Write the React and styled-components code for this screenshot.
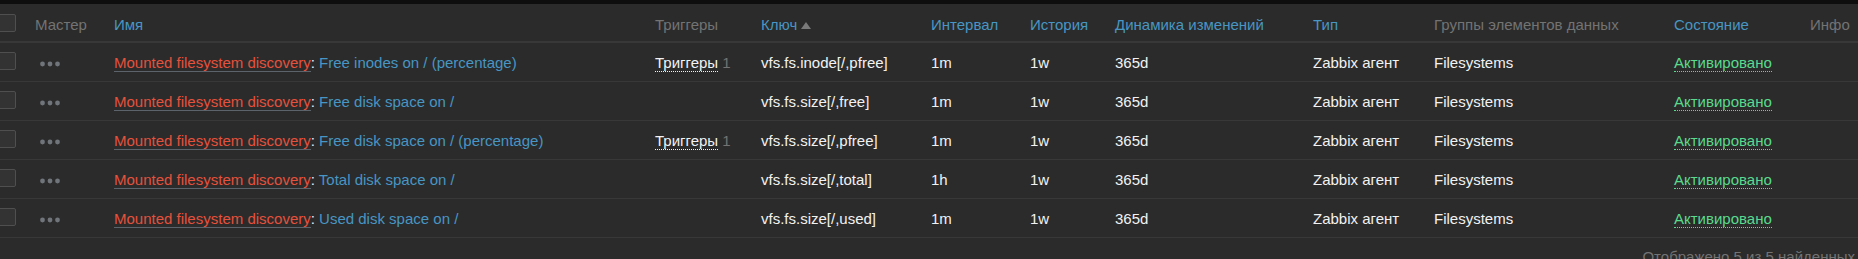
import React from "react";
import styled, { createGlobalStyle } from "styled-components";

const GlobalStyle = createGlobalStyle`
  html, body {
    margin: 0;
    padding: 0;
    background: #2b2b2b;
    overflow: hidden;
  }
  body {
    font-family: "Liberation Sans", Arial, sans-serif;
    font-size: 15px;
    color: #f2f2f2;
  }
`;

const Page = styled.div`
  display: flex;
  flex-direction: column;
`;

const TopBar = styled.div`
  height: 4px;
  background: #0e0e0e;
`;

const Table = styled.table`
  table-layout: fixed;
  border-collapse: separate;
  border-spacing: 0;
  margin-left: -8px;
  width: calc(100% + 8px);
`;

const HeadRow = styled.tr`
  height: 39px;
`;

const Th = styled.th`
  padding: 0 6px 8px;
  text-align: left;
  vertical-align: bottom;
  font-weight: normal;
  white-space: nowrap;
  overflow: hidden;
  line-height: 17px;
  border-bottom: 2px solid #383838;
  color: ${(p) => (p.$sortable ? "#4796c4" : "#737373")};
`;

const CheckTh = styled(Th)`
  vertical-align: middle;
  padding-bottom: 0;
`;

const Row = styled.tr`
  height: 39px;
`;

const Td = styled.td`
  padding: 0 6px;
  vertical-align: middle;
  white-space: nowrap;
  overflow: hidden;
  line-height: 17px;
  border-bottom: 1px solid #383838;
`;

const CheckBox = styled.span`
  display: block;
  width: 18px;
  height: 18px;
  box-sizing: border-box;
  background: #333333;
  border: 1px solid #4f4f4f;
  border-radius: 2px;
  margin-top: ${(p) => (p.$head ? "0" : "-2px")};
`;

const MoreButton = styled.span`
  display: inline-flex;
  margin-left: 5px;
  vertical-align: middle;
`;

const SortArrow = styled.span`
  display: inline-block;
  width: 0;
  height: 0;
  margin-left: 4px;
  border-left: 5px solid transparent;
  border-right: 5px solid transparent;
  border-bottom: 7px solid #7a7a7a;
  vertical-align: 1px;
`;

const MasterLink = styled.span`
  color: #e5513c;
  border-bottom: 1px solid #5d636b;
`;

const Sep = styled.span`
  color: #f2f2f2;
`;

const NameLink = styled.span`
  color: #4796c4;
`;

const DottedLink = styled.span`
  color: ${(p) => p.$color || "#f2f2f2"};
  border-bottom: 1px dotted ${(p) => p.$color || "#f2f2f2"};
`;

const Count = styled.span`
  color: #737373;
  margin-left: 4px;
`;

const Footer = styled.div`
  display: flex;
  justify-content: flex-end;
  padding: 10px 3px 0 0;
  line-height: 17px;
  color: #737373;
`;

const Dots = () => (
  <svg width="20" height="6" viewBox="0 0 20 6">
    <circle cx="2.5" cy="3" r="2.4" fill="#70757b" />
    <circle cx="10" cy="3" r="2.4" fill="#70757b" />
    <circle cx="17.5" cy="3" r="2.4" fill="#70757b" />
  </svg>
);

const rows = [
  { name: "Free inodes on / (percentage)", triggers: 1, key: "vfs.fs.inode[/,pfree]", interval: "1m" },
  { name: "Free disk space on /", triggers: 0, key: "vfs.fs.size[/,free]", interval: "1m" },
  { name: "Free disk space on / (percentage)", triggers: 1, key: "vfs.fs.size[/,pfree]", interval: "1m" },
  { name: "Total disk space on /", triggers: 0, key: "vfs.fs.size[/,total]", interval: "1h" },
  { name: "Used disk space on /", triggers: 0, key: "vfs.fs.size[/,used]", interval: "1m" },
];

const widths = [37, 79, 541, 106, 170, 99, 85, 198, 121, 240, 136, null];

export default function App() {
  return (
    <>
      <GlobalStyle />
      <Page>
        <TopBar />
        <Table>
          <colgroup>
            {widths.map((w, i) => (
              <col key={i} style={w ? { width: w } : undefined} />
            ))}
          </colgroup>
          <thead>
            <HeadRow>
              <CheckTh>
                <CheckBox $head />
              </CheckTh>
              <Th>Мастер</Th>
              <Th $sortable>Имя</Th>
              <Th>Триггеры</Th>
              <Th $sortable>
                Ключ
                <SortArrow />
              </Th>
              <Th $sortable>Интервал</Th>
              <Th $sortable>История</Th>
              <Th $sortable>Динамика изменений</Th>
              <Th $sortable>Тип</Th>
              <Th>Группы элементов данных</Th>
              <Th $sortable>Состояние</Th>
              <Th>Инфо</Th>
            </HeadRow>
          </thead>
          <tbody>
            {rows.map((r) => (
              <Row key={r.key}>
                <Td>
                  <CheckBox />
                </Td>
                <Td>
                  <MoreButton>
                    <Dots />
                  </MoreButton>
                </Td>
                <Td>
                  <MasterLink>Mounted filesystem discovery</MasterLink>
                  <Sep>: </Sep>
                  <NameLink>{r.name}</NameLink>
                </Td>
                <Td>
                  {r.triggers > 0 && (
                    <>
                      <DottedLink>Триггеры</DottedLink>
                      <Count>{r.triggers}</Count>
                    </>
                  )}
                </Td>
                <Td>{r.key}</Td>
                <Td>{r.interval}</Td>
                <Td>1w</Td>
                <Td>365d</Td>
                <Td>Zabbix агент</Td>
                <Td>Filesystems</Td>
                <Td>
                  <DottedLink $color="#59db8f">Активировано</DottedLink>
                </Td>
                <Td />
              </Row>
            ))}
          </tbody>
        </Table>
        <Footer>Отображено 5 из 5 найденных</Footer>
      </Page>
    </>
  );
}
